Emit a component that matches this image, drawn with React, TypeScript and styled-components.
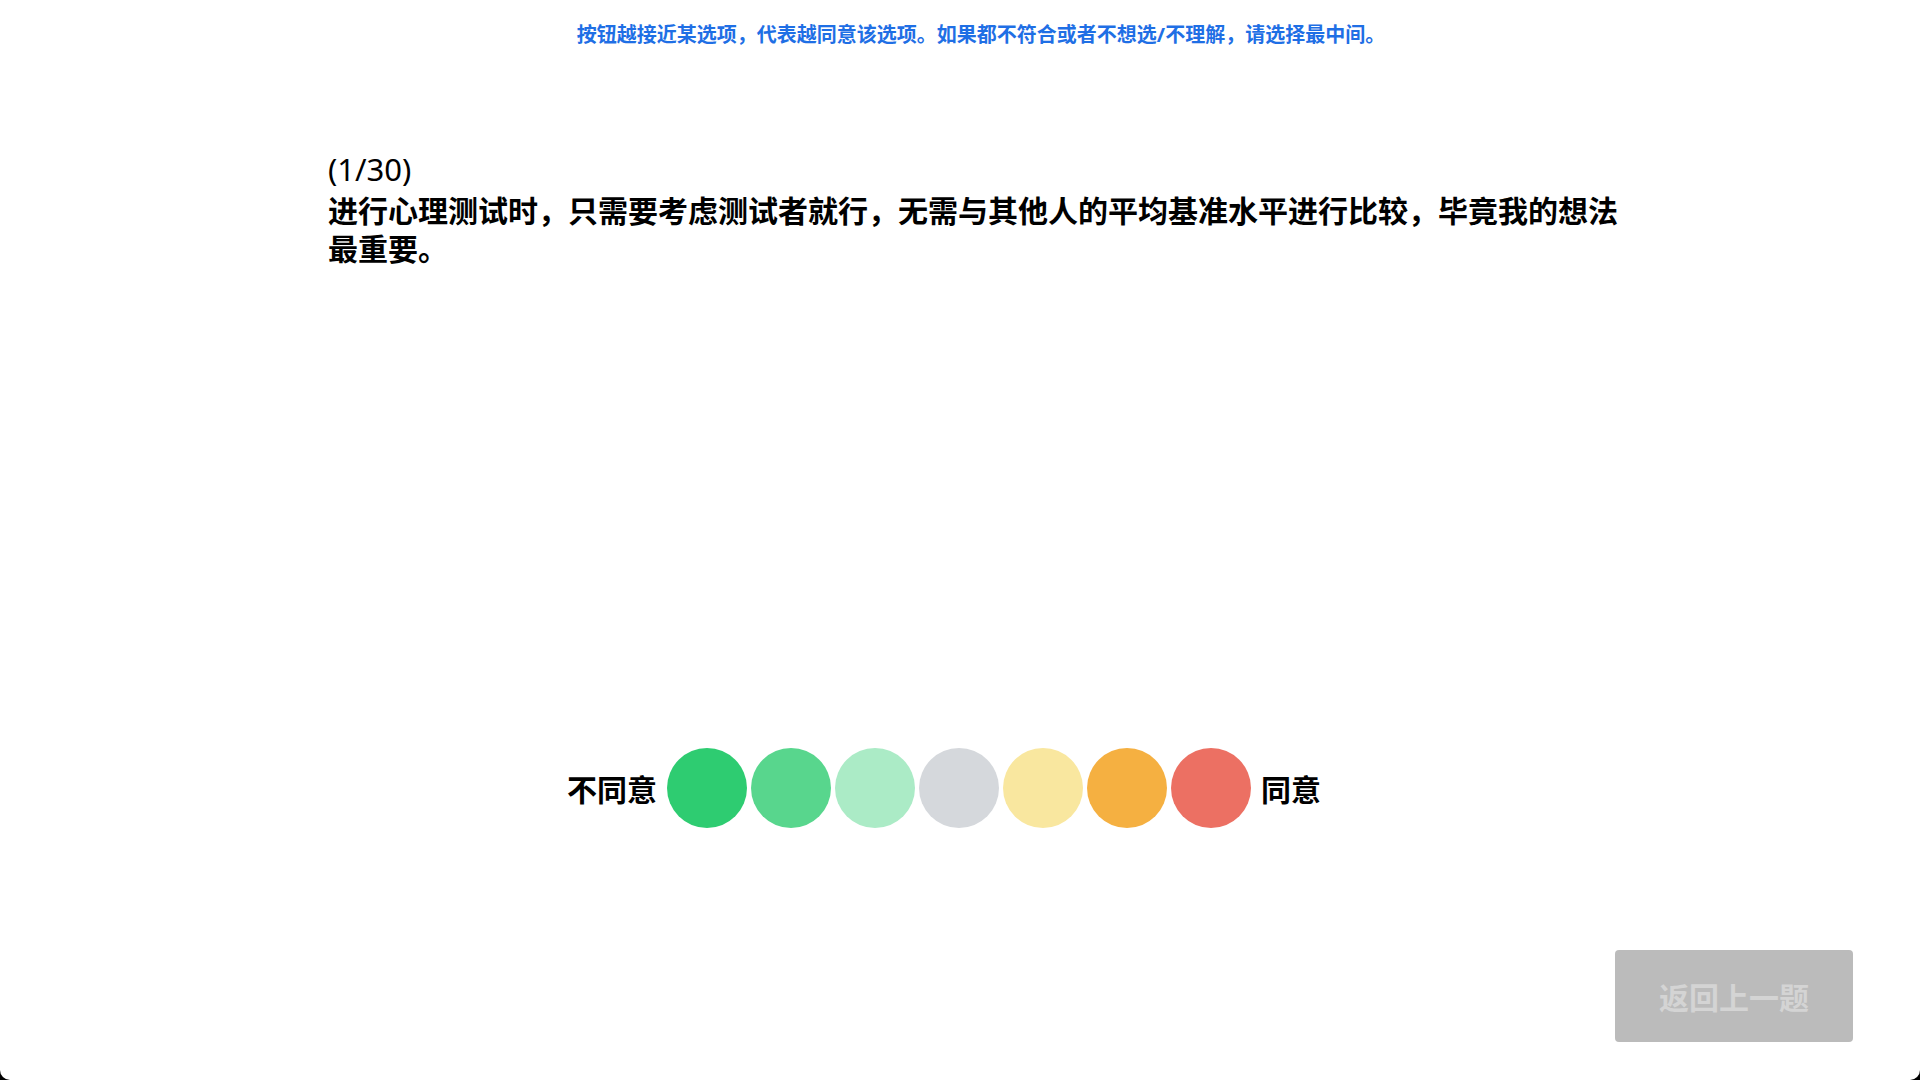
import React from 'react';
import styled, { createGlobalStyle } from 'styled-components';

const GlobalStyle = createGlobalStyle`
  html {
    background: #000;
  }
  body {
    margin: 0;
    font-family: "Noto Sans", "Noto Sans CJK SC", sans-serif;
    color: #000;
  }
  #root {
    background: #fff;
    min-height: 100vh;
    border-radius: 0 0 10px 10px;
    overflow: hidden;
  }
`;

const SCALE = ['#2ecc71', '#58d68d', '#abebc6', '#d5d8dc', '#f9e79f', '#f5b041', '#ec7063'];

export default function App() {
  return (
    <>
      <GlobalStyle />
      <Page>
        <Hint>按钮越接近某选项，代表越同意该选项。如果都不符合或者不想选/不理解，请选择最中间。</Hint>
        <QuestionBlock>
          <Counter>(1/30)</Counter>
          <QuestionText>进行心理测试时，只需要考虑测试者就行，无需与其他人的平均基准水平进行比较，毕竟我的想法最重要。</QuestionText>
        </QuestionBlock>
        <ScaleRow>
          <ScaleLabel>不同意</ScaleLabel>
          <Dots>
            {SCALE.map((c, i) => (
              <Dot key={i} $color={c} aria-label={`选项 ${i + 1}`} />
            ))}
          </Dots>
          <ScaleLabel>同意</ScaleLabel>
        </ScaleRow>
        <Footer>
          <BackButton disabled>返回上一题</BackButton>
        </Footer>
      </Page>
    </>
  );
}

const Page = styled.div`
  display: flex;
  flex-direction: column;
  height: 100vh;
  box-sizing: border-box;
  padding-top: 21px;
`;

const Hint = styled.div`
  text-align: center;
  color: #1f6fe5;
  font-size: 20px;
  font-weight: 700;
  line-height: 28px;
  padding-left: 42px;
`;

const QuestionBlock = styled.div`
  margin-top: 101px;
  margin-left: 328px;
  width: 1300px;
`;

const Counter = styled.div`
  font-size: 31px;
  line-height: 38px;
  margin-bottom: 4px;
`;

const QuestionText = styled.div`
  font-size: 30px;
  font-weight: 700;
  line-height: 38px;
`;

const ScaleRow = styled.div`
  display: flex;
  align-items: center;
  justify-content: center;
  gap: 10px;
  margin-top: 480px;
  padding-right: 32px;
`;

const ScaleLabel = styled.span`
  font-size: 30px;
  font-weight: 700;
`;

const Dots = styled.div`
  display: flex;
  gap: 4px;
`;

const Dot = styled.button<{ $color: string }>`
  width: 80px;
  height: 80px;
  border: none;
  padding: 0;
  border-radius: 50%;
  background: ${(p) => p.$color};
  cursor: pointer;
`;

const Footer = styled.div`
  display: flex;
  justify-content: flex-end;
  margin-top: auto;
  padding: 0 67px 38px 0;
`;

const BackButton = styled.button`
  width: 238px;
  height: 92px;
  border: none;
  border-radius: 4px;
  background: #bbbbbb;
  color: #d4d4d4;
  font-family: "Noto Sans", "Noto Sans CJK SC", sans-serif;
  font-size: 30px;
  font-weight: 700;
`;
